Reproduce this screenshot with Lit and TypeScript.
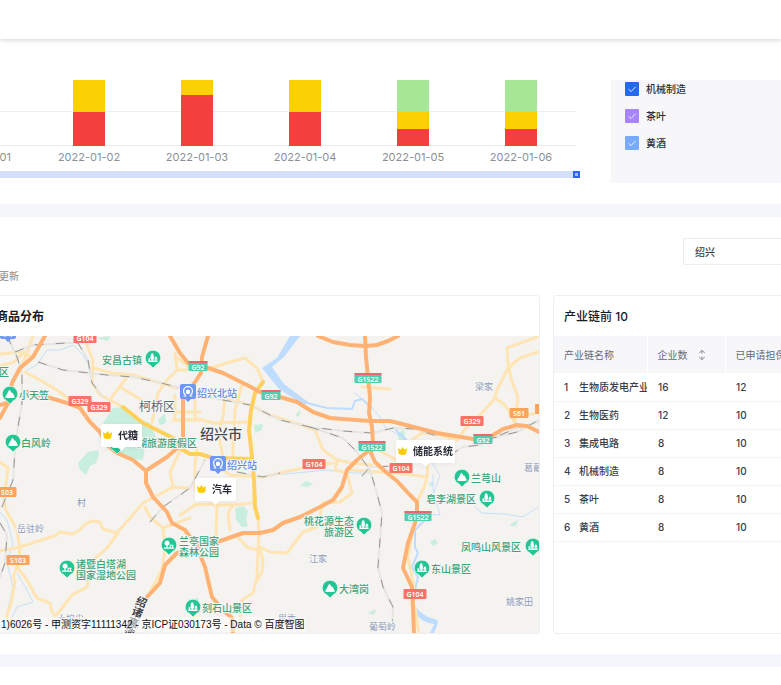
import { LitElement, html, svg, css, nothing } from "lit";
import { customElement } from "lit/decorators.js";

type Pt = string;

const RED = "#f43f3f";
const YELLOW = "#fbd103";
const GREEN = "#a6e795";

/* Each day lists its segments from the top down: colour and height. */
const DAYS: { date: string; parts: [string, number][] }[] = [
  { date: "2022-01-01", parts: [] },
  { date: "2022-01-02", parts: [[YELLOW, 32], [RED, 34]] },
  { date: "2022-01-03", parts: [[YELLOW, 15], [RED, 51]] },
  { date: "2022-01-04", parts: [[YELLOW, 32], [RED, 34]] },
  { date: "2022-01-05", parts: [[GREEN, 32], [YELLOW, 17], [RED, 17]] },
  { date: "2022-01-06", parts: [[GREEN, 32], [YELLOW, 17], [RED, 17]] },
];

const CHAINS = [
  { name: "机械制造", tone: "blue" },
  { name: "茶叶", tone: "violet" },
  { name: "黄酒", tone: "sky" },
];

const ROWS: [string, number, number][] = [
  ["生物质发电产业", 16, 12],
  ["生物医药", 12, 10],
  ["集成电路", 8, 10],
  ["机械制造", 8, 10],
  ["茶叶", 8, 10],
  ["黄酒", 8, 10],
];

const RIVERS: Pt[] = [
  "300,398 307,403 327,408 352,409 355,401 362,399 372,408",
  "425,520 415,530 415,547 418,553 412,567 418,577 415,590 413,603",
  "396,430 403,437 412,445",
];

const STREAMS: Pt[] = [
  "270,376 287,392 307,403",
  "355,393 372,408 380,417 385,427 402,437 412,445",
  "273,475 307,472 327,470 353,473 372,473 395,470",
  "27,370 37,365 47,350 60,350 73,345 83,355 90,367",
  "0,512 7,520 13,543 7,563 13,587 7,613",
  "17,573 27,590 33,602 17,607 11,620",
  "475,507 482,513 505,514 523,517 538,507",
  "433,475 433,490 440,515 423,514",
  "430,460 440,475 434,492",
];

const MINOR: Pt[] = [
  "33,336 28,350 23,363 20,372",
  "0,354 20,352 33,357",
  "0,366 14,362 24,352",
  "25,372 40,380 57,390 70,400",
  "86,343 93,360 92,383 100,395 110,400 123,407",
  "93,368 113,373 133,375 157,382 177,388",
  "128,376 117,390 110,400",
  "120,387 133,395 146,402",
  "175,353 177,370 167,380 158,393 152,423",
  "177,370 187,370",
  "175,356 188,366",
  "173,412 200,412",
  "173,420 200,420",
  "175,395 175,420",
  "195,395 195,420",
  "207,369 230,362 245,358 257,368 263,382",
  "225,398 250,405 270,415 307,427 315,430 323,450 337,460 352,463 372,465",
  "242,385 235,410 233,447 233,457",
  "225,397 223,417 218,433 223,457",
  "180,420 200,419 213,423 247,422",
  "197,450 195,463 195,490",
  "220,467 230,475 263,477 280,473 307,467 333,463",
  "337,460 335,470 347,473 352,493 340,502 323,503 317,527 303,532 293,545 287,553 270,552 260,547",
  "258,518 259,533 258,550 257,577 253,593 242,600 240,620",
  "260,550 263,560 262,572 256,582",
  "238,537 247,547 258,550",
  "230,530 228,513 233,505 252,503",
  "233,505 217,505 216,535",
  "180,515 195,505 217,504",
  "0,551 20,547 57,535 59,532 73,534 80,530 85,524 93,521 100,522 103,529 117,533 143,503 173,487 190,488",
  "118,533 107,548 90,563 87,587 72,595 55,617",
  "0,462 8,468 4,500 6,510 17,530 20,550 17,567 27,580 37,598 50,603 52,612 67,627",
  "17,567 13,577 15,581 11,603 6,618 20,624",
  "182,447 170,472 173,487",
  "145,507 150,517 163,528 165,550 162,570 150,592",
  "163,528 190,518",
  "537,337 507,348 508,365 512,382 518,397 515,422",
  "538,352 520,358 508,368 497,390 495,398 483,412 466,428 457,440",
  "495,398 505,405 510,413 515,424",
  "528,414 534,414",
  "457,440 440,435 422,433 412,440",
  "374,448 393,458 410,468",
  "350,470 380,472 405,474 427,477 428,460",
  "427,477 425,485 417,502",
  "362,387 390,389",
  "412,535 408,557 412,577 414,590",
  "415,608 419,634",
];

const HIGHWAYS: Pt[] = [
  "365,336 366,357 368,378 370,397 369,413 372,427 373,443 371,453 375,462 387,473 397,481 410,495 417,502 417,512 415,523 408,543 403,568 412,587 413,607 414,634",
  "170,336 180,353 188,363 208,368 223,373 247,385 260,392 280,397 297,402 313,412 330,418 370,421 390,421 410,426 437,433 473,439 490,437 503,429 517,425 527,426 539,432",
  "318,336 333,342 350,345 365,346 377,345 388,341 398,336",
  "208,336 202,357 201,373 193,385 183,395 183,443 167,457 147,470",
  "45,336 33,357 20,368 12,383 8,403 0,418",
  "0,405 10,402",
  "27,392 47,397 67,403 80,408 90,422 100,432 107,445 117,453 133,460 146,471 146,483 153,497 167,512 172,523 185,530 197,547 205,567 212,597 223,610 232,618 233,634",
  "197,547 223,540 243,533 260,533 273,530 283,523 300,517 320,507 333,500 342,487 347,470 357,460 372,448",
  "190,550 177,553 165,565 160,583 147,597",
];

const MAIN: Pt[] = [
  "263,382 255,393 251,410 249,430 252,457 254,480 255,507 258,518",
  "123,407 143,423 173,438 180,448 190,454 200,454 213,458 252,459",
];

const RAILS: Pt[] = [
  "15,352 33,345 67,343 78,343 88,360 92,383 103,397",
  "38,362 63,370 107,375 133,377 157,382 177,387 212,398 250,405 280,420 310,427 343,431 372,433 393,428 415,429 437,436",
  "310,427 343,438 357,452 370,470 376,490 382,513 378,567 383,587 393,607 392,634",
  "7,336 17,357 22,373 22,403 18,427 15,450 13,480 2,507",
  "0,523 7,535 5,563 0,577",
  "150,522 163,507 190,488 205,460",
  "450,455 463,447 480,445 493,438 517,432 539,420",
  "500,435 520,427 539,422",
  "237,472 263,477 280,473",
  "362,476 370,467 395,466",
  "147,600 135,634",
];

const PARKS: Pt[] = [
  "103,423 113,408 123,407 133,417 150,423 156,437 145,447 143,460 130,459 118,452",
  "78,463 88,452 98,450 99,455 96,463 90,466 86,475 80,470",
  "235,508 243,506 248,511 246,520 248,526 242,527 236,520",
  "254,425 263,424 262,430 255,433",
  "430,542 435,539 438,543 433,546",
  "512,523 518,520 516,526 510,526",
  "300,486 306,481 313,484 307,487",
  "296,414 300,410 300,415 297,417",
  "397,433 404,430 406,440 399,440",
  "97,338 110,336 108,341",
  "188,600 198,598 199,612 188,613",
  "428,483 434,482 432,487",
  "158,420 165,413 166,423 160,425",
  "368,613 376,609 374,615",
];

type Sign = [x: number, y: number, text: string, kind: "nat" | "exp" | "prov"];
const SIGNS: Sign[] = [
  [85, 338, "G104", "nat"],
  [80, 401, "G329", "nat"],
  [99, 407, "G329", "nat"],
  [472, 421, "G329", "nat"],
  [401, 468, "G104", "nat"],
  [314, 464, "G104", "nat"],
  [415, 594, "G104", "nat"],
  [198, 366, "G92", "exp"],
  [271, 395, "G92", "exp"],
  [483, 439, "G92", "exp"],
  [368, 378, "G1522", "exp"],
  [372, 446, "G1522", "exp"],
  [418, 516, "G1522", "exp"],
  [519, 413, "S61", "prov"],
  [7, 492, "S03", "prov"],
  [18, 560, "S103", "prov"],
];
const SIGN_FILL = { nat: "#fb7268", exp: "#4fceb0", prov: "#fda35c" };

type Pin = [x: number, y: number, kind: "tree" | "hill" | "park"];
const PINS: Pin[] = [
  [117, 444, "tree"],
  [153, 358, "tree"],
  [10, 394, "hill"],
  [13, 442, "hill"],
  [364, 525, "tree"],
  [462, 477, "hill"],
  [487, 498, "tree"],
  [533, 546, "tree"],
  [422, 568, "tree"],
  [330, 588, "hill"],
  [193, 607, "tree"],
  [169, 545, "park"],
  [67, 568, "park"],
];

const STATIONS: [number, number][] = [[188, 392], [218, 464], [8, 332]];

type Label = [x: number, y: number, text: string, cls: string];
const LABELS: Label[] = [
  [102, 364, "安昌古镇", "spot"],
  [-1, 376, "区", "spot"],
  [19, 399, "小天笠", "spot"],
  [21, 447, "白风岭", "spot"],
  [137, 447, "湖旅游度假区", "spot"],
  [471, 482, "兰芎山", "spot"],
  [426, 503, "皂李湖景区", "spot"],
  [304, 525, "桃花源生态", "spot"],
  [324, 536, "旅游区", "spot"],
  [461, 551, "凤鸣山风景区", "spot"],
  [431, 573, "东山景区", "spot"],
  [339, 593, "大湾岗", "spot"],
  [202, 612, "刻石山景区", "spot"],
  [179, 545, "兰亭国家", "spot"],
  [179, 556, "森林公园", "spot"],
  [76, 568, "诸暨白塔湖", "spot"],
  [76, 579, "国家湿地公园", "spot"],
  [197, 397, "绍兴北站", "stop"],
  [227, 469, "绍兴站", "stop"],
  [139, 411, "柯桥区", "district"],
  [200, 439, "绍兴市", "city"],
  [475, 390, "梁家", "village"],
  [524, 471, "葛蕺", "village"],
  [506, 605, "姚家田", "village"],
  [309, 562, "江家", "village"],
  [369, 630, "葡萄岭", "village"],
  [17, 532, "岳驻岭", "village"],
  [77, 506, "村", "village"],
  [57, 622, "大坞尖", "village"],
  [278, 622, "里秀", "village"],
];

const CALLOUTS: [x: number, y: number, w: number, text: string][] = [
  [101, 424, 41, "代糖"],
  [195, 478, 41, "汽车"],
  [396, 440, 59, "储能系统"],
];

const lines = (list: Pt[], cls: string) =>
  list.map((p) => svg`<polyline class=${cls} points=${p}></polyline>`);

@customElement("region-map")
class RegionMap extends LitElement {
  static styles = css`
    :host { display: block; overflow: hidden; background: #f4f3ef; }
    svg { display: block; width: 100%; height: 100%; }
    polyline { fill: none; stroke-linecap: round; stroke-linejoin: round; }
    .river { stroke: #bedcff; stroke-width: 2; }
    .stream { stroke: #c6dffc; stroke-width: 1; }
    .lake { fill: #bedcff; }
    .park { fill: #c8eedd; }
    .minor { stroke: #ffe4b4; stroke-width: 3; }
    .main { stroke: #ffd05c; stroke-width: 4; }
    .highway { stroke: #ffb274; stroke-width: 4; }
    .rail-bed { stroke: #e6e5e2; stroke-width: 2; }
    .rail { stroke: #97958f; stroke-width: 1; stroke-linecap: butt; stroke-dasharray: 9 12; }
    text { font-family: "Noto Sans CJK SC", sans-serif; }
    .spot, .stop, .district, .city, .village {
      paint-order: stroke; stroke: #f8f7f4; stroke-width: 2px; stroke-linejoin: round;
    }
    .spot { font-size: 10px; fill: #3da57c; font-weight: 500; }
    .stop { font-size: 10px; fill: #6089ea; font-weight: 500; }
    .district { font-size: 12px; fill: #5c6675; }
    .city { font-size: 14px; fill: #454a52; font-weight: 500; }
    .village { font-size: 9px; fill: #8e9bbb; }
    .route {
      font-size: 11px; font-weight: 700; fill: #41444a;
      paint-order: stroke; stroke: #f8f7f4; stroke-width: 2px;
    }
    .sign { font-family: "Noto Sans", sans-serif; font-size: 7px; fill: #fff; text-anchor: middle; font-weight: 600; }
    .callout { font-size: 10px; font-weight: 700; fill: #262b35; }
    .bubble { filter: drop-shadow(0 1px 2px rgba(0, 0, 0, 0.06)); }
  `;

  private glyph(kind: Pin[2]) {
    if (kind === "hill")
      return svg`<path fill="#fff" d="M-5 3.5 L-1.2 -3.6 Q-0.5 -4.6 0.2 -3.6 L1.4 -1.2 Q2 -2 2.7 -1 L5 3.5 Q0 4.6 -5 3.5Z"></path>`;
    if (kind === "tree")
      return svg`<path fill="#fff" d="M-0.8 -5 Q0.6 -4.4 0.8 -2 L1 1.6 H-0.2 V3 H-1.4 V1.6 H-2.6 L-2.4 -2 Q-2.2 -4.4 -0.8 -5Z M2.9 -1.8 Q4.4 -0.8 4.4 1.6 H3.4 V3 H2.4 V1.6 H1.4 Q1.4 -0.8 2.9 -1.8Z M-4.4 0 L-3 0.4 V3 H-4.4Z M-4.6 2.6 H4.6 V4 H-4.6Z"></path>`;
    return svg`<path fill="#fff" d="M-2 -4.4 Q0.6 -4.2 0.6 -1.6 Q0.4 0.4 -1.4 0.4 V2.6 H0.6 V-0.2 H4.6 V0.8 H4 V2.6 H5 V3.8 H-5 V2.6 H-2.6 V0.4 Q-4.6 0.2 -4.6 -1.8 Q-4.4 -4.2 -2 -4.4Z M1.6 0.8 V2.6 H3 V0.8Z"></path>`;
  }

  render() {
    return html`<svg viewBox="0 336 539 297" preserveAspectRatio="xMinYMin slice" role="img" aria-label="商品分布地图">
      ${PARKS.map((p) => svg`<polygon class="park" points=${p}></polygon>`)}
      <path class="lake" d="M290 336 H300 L284 357 L272 367 L284 384 L308 402 L304 405 L279 389 L262 368 L277 358Z"></path>
      <path class="lake" d="M413 603 Q420 615 434 619 Q440 620 437 626 L434 633 H430 L434 624 Q418 622 411 606Z"></path>
      ${lines(STREAMS, "stream")} ${lines(RIVERS, "river")}
      ${lines(MINOR, "minor")} ${lines(RAILS, "rail-bed")} ${lines(RAILS, "rail")}
      ${lines(MAIN, "main")} ${lines(HIGHWAYS, "highway")}
      ${SIGNS.map(([x, y, t, k]) => {
        const w = t.length * 4 + 7;
        return svg`<rect x=${x - w / 2} y=${y - 5} width=${w} height="10" rx="1" fill=${SIGN_FILL[k]}></rect>
          ${k === "exp" ? svg`<rect x=${x - w / 2} y=${y - 5} width=${w} height="2" fill="#e8686b"></rect>` : nothing}
          <text class="sign" x=${x} y=${y + (k === "exp" ? 4 : 3)}>${t}</text>`;
      })}
      <rect x="535" y="404" width="8" height="10" rx="1" fill="#fda35c"></rect>
      ${LABELS.map(([x, y, t, c]) => svg`<text class=${c} x=${x} y=${y}>${t}</text>`)}
      <g transform="rotate(22 141 602)">
        ${["绍", "诸", "高", "速"].map((t, i) => svg`<text class="route" x="136" y=${606 + i * 11}>${t}</text>`)}
      </g>
      ${PINS.map(([x, y, k]) => svg`<g transform="translate(${x} ${y})">
        <path fill="#22c593" stroke="#fff" stroke-width="0.6" d="M-7.8 0 A7.8 7.8 0 1 1 7.8 0 Q7.6 4.6 3 7 L0 10 L-3 7 Q-7.6 4.6 -7.8 0Z"></path>
        ${this.glyph(k)}</g>`)}
      ${STATIONS.map(([x, y]) => svg`<g transform="translate(${x} ${y})">
        <path fill="#6e97f8" d="M-6 -8 H6 Q8 -8 8 -6 V5 Q8 7 6 7 H3 L0 10 L-3 7 H-6 Q-8 7 -8 5 V-6 Q-8 -8 -6 -8Z"></path>
        <path fill="none" stroke="#fff" stroke-width="1.2" d="M-2.4 3 Q-4.6 1.6 -4.4 -1 A4.4 4.4 0 0 1 4.4 -1 Q4.6 1.6 2.4 3 M-4.4 4 H-1.6 M1.6 4 H4.4"></path>
        <path fill="#fff" d="M-2 -1.6 Q0 -3.6 2 -1.6 V1 L1.2 2 H-1.2 L-2 1Z"></path></g>`)}
      ${CALLOUTS.map(([x, y, w, t]) => svg`<g class="bubble" transform="translate(${x} ${y})">
        <path fill="#fff" d="M2 0 H${w - 2} Q${w} 0 ${w} 2 V21 Q${w} 23 ${w - 2} 23 H${w / 2 + 4} L${w / 2} 27 L${w / 2 - 4} 23 H2 Q0 23 0 21 V2 Q0 0 2 0Z"></path>
        <path fill="#fbcb05" d="M2 8 L4.6 9.8 L6.5 7 L8.4 9.8 L11 8 L10.2 14 Q6.5 16 2.8 14Z"></path>
        <text class="callout" x="17" y="15">${t}</text></g>`)}
    </svg>`;
  }
}

@customElement("app-root")
class AppRoot extends LitElement {
  static styles = css`
    :host {
      display: block; background: #fff; color: #3a404b; overflow: hidden;
      font: 10px/14px Inter, "Noto Sans CJK SC", sans-serif;
    }
    * { box-sizing: border-box; }
    .topbar { height: 39px; background: #fff; box-shadow: 0 1px 5px rgba(0, 0, 0, 0.18); }
    .overview { display: flex; gap: 31px; padding: 41px 0 21px; }
    .chart { flex: 1; min-width: 0; overflow: hidden; }
    .plot { display: flex; justify-content: flex-end; margin-right: 4px; padding-right: 1px; position: relative; }
    .plot::before {
      content: ""; position: absolute; inset: 31px 0 auto; height: 33px;
      border: 1px solid #eaeef3; border-width: 1px 0;
    }
    .day { flex: 0 0 108px; display: flex; flex-direction: column; align-items: center; }
    .stack { position: relative; width: 32px; height: 66px; }
    .date { margin-top: 4px; font-size: 11px; color: #8b8f97; white-space: nowrap; }
    .zoombar { display: flex; justify-content: flex-end; height: 7px; margin-top: 7px; background: #d3dffb; }
    .grip { width: 7px; height: 7px; padding: 0; border: 2px solid #2b66f6; background: #9dbafc; }
    .chains {
      flex: 0 0 170px; height: 103px; padding: 2px 14px;
      background: #f7f7fa; display: flex; flex-direction: column; gap: 13px;
    }
    .chain { display: flex; align-items: center; gap: 7px; height: 14px; font-weight: 500; line-height: 12px; color: #2a2f3a; }
    .tick { display: grid; width: 14px; height: 14px; }
    .tick input { appearance: none; margin: 0; grid-area: 1 / 1; border-radius: 1px; }
    .tick svg { grid-area: 1 / 1; pointer-events: none; z-index: 1; }
    .blue { background: #2468f2; }
    .violet { background: #a785ff; }
    .sky { background: #78abff; }
    .band { height: 13px; background: #f5f6fb; }
    .toolbar { display: flex; justify-content: flex-end; padding-top: 21px; }
    select {
      appearance: none; width: 98px; height: 27px; padding: 0 11px; font: inherit; font-weight: 500; color: #3a404b;
      background: #fff; border: 1px solid #ececef; border-right: 0; border-radius: 3px 0 0 3px;
    }
    .updated { display: flex; justify-content: flex-end; width: 19px; margin: 4px 0 12px; color: #84888f; white-space: nowrap; }
    .cards { display: flex; gap: 13px; padding-bottom: 20px; }
    .card { border: 1px solid #efeff1; overflow: hidden; }
    .map-card { flex: 1; min-width: 0; border-left: 0; border-radius: 0 4px 4px 0; position: relative; }
    .rank-card { flex: 0 0 228px; border-right: 0; border-radius: 4px 0 0 4px; }
    h2 { margin: 0; height: 40px; font-size: 12px; line-height: 42px; font-weight: 500; color: #151b26; white-space: nowrap; }
    .map-title { display: flex; justify-content: flex-end; width: 44px; font-weight: 700; }
    .rank-title { padding-left: 10px; }
    region-map { height: 297px; }
    .credit {
      position: absolute; left: 0; bottom: 1px; height: 15px; line-height: 15px; padding: 0 2px 0 1px;
      background: rgba(255, 255, 255, 0.5); color: #111; white-space: nowrap;
      font-family: "Liberation Sans", "Noto Sans CJK SC", sans-serif;
    }
    table { width: 100%; border-collapse: collapse; table-layout: fixed; }
    th, td { text-align: left; padding: 0 0 0 10px; white-space: nowrap; overflow: hidden; }
    th { height: 37px; background: #f7f7fa; font-weight: 400; color: #666a73; border-left: 1px solid #fff; }
    th:first-child { border-left: 0; }
    td { height: 28px; border-bottom: 1px solid #f3f3f5; font-weight: 500; }
    td:not(:first-child) { padding-left: 11px; }
    .c1 { width: 93px; }
    .c2 { width: 78px; }
    .no { display: inline-block; width: 15px; }
    .head { display: flex; align-items: center; gap: 10px; }
    .sort { padding: 0; border: 0; background: none; }
    .sort svg { display: block; }
  `;

  render() {
    return html`
      <header class="topbar"></header>
      <section class="overview">
        <div class="chart">
          <div class="plot">
            ${DAYS.map((d) => html`<div class="day">
              <div class="stack">
                ${d.parts.map(([c, h]) => html`<div style="height:${h}px;background:${c}"></div>`)}
              </div>
              <div class="date">${d.date}</div>
            </div>`)}
          </div>
          <div class="zoombar"><button class="grip" aria-label="缩放"></button></div>
        </div>
        <div class="chains">
          ${CHAINS.map((c) => html`<label class="chain">
            <span class="tick">
              <input type="checkbox" class=${c.tone} checked />
              <svg width="14" height="14" viewBox="0 0 14 14"><path d="M3.5 7.2 L6 9.6 L10.6 4.8" fill="none" stroke="#fff" stroke-opacity="0.85"></path></svg>
            </span>${c.name}</label>`)}
        </div>
      </section>
      <div class="band"></div>
      <section>
        <div class="toolbar">
          <select aria-label="地区"><option>绍兴</option></select>
        </div>
        <div class="updated">更新</div>
        <div class="cards">
          <article class="card map-card">
            <h2 class="map-title">商品分布</h2>
            <region-map></region-map>
            <div class="credit">1)6026号 - 甲测资字11111342 - 京ICP证030173号 - Data © 百度智图</div>
          </article>
          <article class="card rank-card">
            <h2 class="rank-title">产业链前 10</h2>
            <table>
              <colgroup><col class="c1" /><col class="c2" /><col /></colgroup>
              <thead><tr>
                <th>产业链名称</th>
                <th><div class="head">企业数<button class="sort" aria-label="排序"><svg width="8" height="12" viewBox="0 0 8 12"><path d="M1.2 4 L4 1.4 L6.8 4 M4 1.4 V4.6 M1.2 8 L4 10.6 L6.8 8 M4 10.6 V7.4" fill="none" stroke="#8b8f97"></path></svg></button></div></th>
                <th>已申请担保</th>
              </tr></thead>
              <tbody>
                ${ROWS.map(([name, a, b], i) => html`<tr>
                  <td><span class="no">${i + 1}</span>${name}</td>
                  <td>${a}</td><td>${b}</td>
                </tr>`)}
              </tbody>
            </table>
          </article>
        </div>
      </section>
      <div class="band"></div>
    `;
  }
}
